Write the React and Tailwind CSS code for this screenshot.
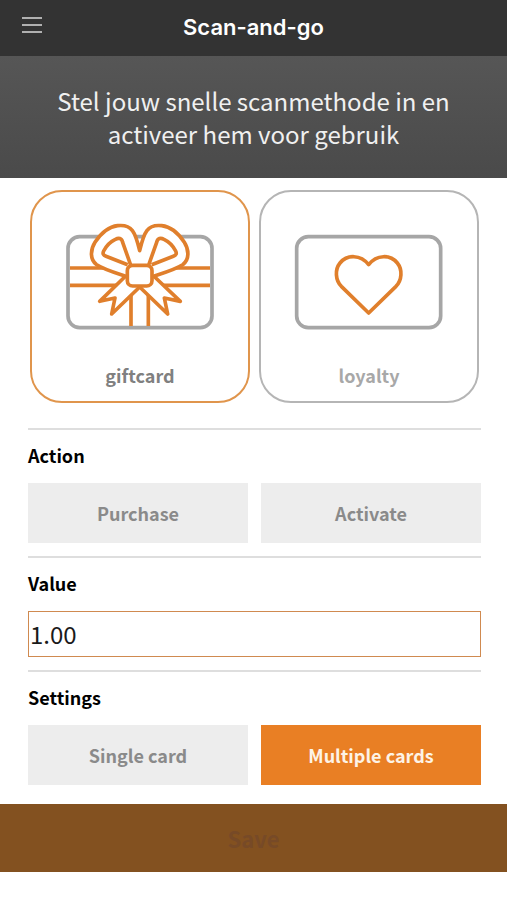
import { useState } from 'react';

const actions = ['Purchase', 'Activate'];
const settings = ['Single card', 'Multiple cards'];

function GiftcardIcon() {
  return (
    <svg
      className="w-40 max-w-full"
      viewBox="3 0 480 360"
      fill="none"
      stroke="#e07f2c"
      strokeWidth="11"
      strokeLinejoin="round"
      aria-hidden="true"
    >
      <rect x="27" y="65" width="432" height="273" rx="35" stroke="#a6a6a6" />
      {/* Ribbon */}
      <path d="M33 159H453M33 211H453" />
      <path d="M216 230V333M268 230V333" />
      {/* Tails */}
      <path fill="#fff" d="M200 183L122 259L168 249L158 297L242 216L326 297L316 249L364 259L284 183Z" />
      {/* Bow */}
      <path fill="#fff" d="M208 186C172 174 136 164 113 149C92 134 94 104 108 82C125 56 149 35 176 32C219 27 229 51 242 107C255 51 265 27 308 32C335 35 359 56 376 82C390 104 392 134 371 149C348 164 312 174 276 186Z" />
      <path d="M215 150L191 82C188 69 179 68 169 73C154 80 141 94 134 108C130 116 133 121 141 124L206 149" />
      <path d="M269 150L293 82C296 69 305 68 315 73C330 80 343 94 350 108C354 116 351 121 343 124L278 149" />
      <rect x="205" y="151" width="74" height="62" rx="16" fill="#fff" />
    </svg>
  );
}

function LoyaltyIcon() {
  return (
    <svg
      className="w-40 max-w-full"
      viewBox="3 0 480 360"
      fill="none"
      strokeWidth="11"
      strokeLinejoin="round"
      aria-hidden="true"
    >
      <rect x="26" y="65" width="432" height="273" rx="35" stroke="#a6a6a6" />
      <path
        stroke="#e07f2c"
        d="M242 294L160 214C142 195 140 164 156 144C177 118 218 118 242 149C266 118 307 118 328 144C344 164 342 195 324 214Z"
      />
    </svg>
  );
}

function MethodCard({ label, icon, isActive, onClick }) {
  return (
    <button
      type="button"
      onClick={onClick}
      aria-pressed={isActive}
      className={`flex flex-1 flex-col items-center rounded-4xl border-2 bg-white pt-[23px] pb-[13px] ${
        isActive ? 'border-[#e0954c] text-[#808080]' : 'border-[#b5b5b5] text-[#a8a8a8]'
      }`}
    >
      {icon}
      <span className="mt-7 text-lg leading-[25px] font-bold">{label}</span>
    </button>
  );
}

function OptionGroup({ id, title, options, selected, onSelect }) {
  return (
    <section aria-labelledby={id} className="border-t-2 border-[#dedede] pb-[13px]">
      <h2 id={id} className="pt-[13px] pb-[15px] text-lg leading-[25px] font-bold text-black">{title}</h2>
      <div className="grid grid-cols-2 gap-[13px]">
        {options.map((option) => (
          <button
            key={option}
            type="button"
            onClick={() => onSelect(option)}
            aria-pressed={selected === option}
            className={`h-15 text-lg font-bold ${
              selected === option ? 'bg-[#e97f24] text-[#fdf3e6]' : 'bg-[#ededed] text-[#8a8a8a]'
            }`}
          >
            {option}
          </button>
        ))}
      </div>
    </section>
  );
}

export default function App() {
  const [method, setMethod] = useState('giftcard');
  const [action, setAction] = useState(null);
  const [value, setValue] = useState('1.00');
  const [setting, setSetting] = useState('Multiple cards');

  return (
    <div className="min-h-screen bg-white font-['Noto_Sans_CJK_SC','Noto_Sans',sans-serif]">
      {/* Top bar */}
      <header className="grid h-14 grid-cols-[1fr_auto_1fr] items-center bg-[#333] px-5">
        <button type="button" aria-label="Menu" className="flex w-6 flex-col items-center gap-[5px] pb-1.5">
          <span className="h-0.5 w-5 bg-[#b0b0b0]" />
          <span className="h-0.5 w-5 bg-[#b0b0b0]" />
          <span className="h-0.5 w-5 bg-[#b0b0b0]" />
        </button>
        <h1 className="pb-0.5 font-['Inter',sans-serif] text-[22px] font-semibold text-white">Scan-and-go</h1>
      </header>

      <div className="bg-linear-to-b from-[#565656] to-[#4a4a4a] px-10 py-7">
        <p className="text-center text-2xl leading-[33px] text-[#f0f0f0]">
          Stel jouw snelle scanmethode in en activeer hem voor gebruik
        </p>
      </div>

      <main className="pt-3 pr-[26px] pl-7">
        <div className="mb-[25px] flex gap-[9px] px-0.5">
          <MethodCard
            label="giftcard"
            icon={<GiftcardIcon />}
            isActive={method === 'giftcard'}
            onClick={() => setMethod('giftcard')}
          />
          <MethodCard
            label="loyalty"
            icon={<LoyaltyIcon />}
            isActive={method === 'loyalty'}
            onClick={() => setMethod('loyalty')}
          />
        </div>

        <OptionGroup id="action" title="Action" options={actions} selected={action} onSelect={setAction} />

        {/* Amount */}
        <div className="border-t-2 border-[#dedede] pb-[13px]">
          <label htmlFor="value" className="block pt-[13px] pb-[15px] text-lg leading-[25px] font-bold text-black">
            Value
          </label>
          <input
            id="value"
            type="text"
            inputMode="decimal"
            value={value}
            onChange={(e) => setValue(e.target.value)}
            className="block h-[46px] w-full border border-[#d08a50] px-px pb-0.5 text-2xl text-[#1a1a1a] outline-none"
          />
        </div>

        <OptionGroup id="settings" title="Settings" options={settings} selected={setting} onSelect={setSetting} />
      </main>

      <button type="button" disabled className="mt-1.5 h-[68px] w-full bg-[#835120] text-[22px] font-bold text-[#774a27]">
        Save
      </button>
    </div>
  );
}
